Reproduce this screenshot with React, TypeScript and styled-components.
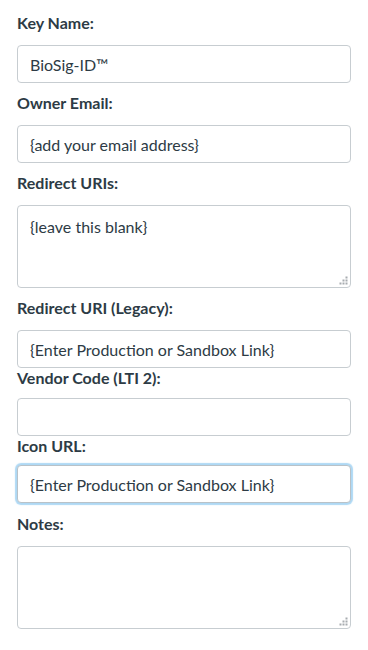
import React from "react";
import styled, { createGlobalStyle, css } from "styled-components";

const Global = createGlobalStyle`
  html, body { margin: 0; padding: 0; background: #ffffff; }
  body { font-family: Lato, "Noto Sans", sans-serif; color: #2d3b45; }
  * { box-sizing: border-box; }
`;

const Form = styled.form`
  display: flex;
  flex-direction: column;
  padding: 13px 17px 0 17px;
  width: 368px;
`;

const Field = styled.div<{ $after: number }>`
  display: flex;
  flex-direction: column;
  margin-bottom: ${(p) => p.$after}px;
`;

const Label = styled.label<{ $gap?: number }>`
  font-family: Lato, "Noto Sans", sans-serif;
  font-weight: 700;
  font-size: 16px;
  line-height: 20px;
  color: #2d3b45;
  margin-bottom: ${(p) => p.$gap ?? 12}px;
`;

const controlBase = css<{ $focus?: boolean }>`
  width: 334px;
  font-family: Lato, "Noto Sans", sans-serif;
  font-size: 16px;
  color: #2d3b45;
  background: #ffffff;
  border: 1px solid #c7cdd1;
  border-radius: 4px;
  outline: none;
  margin: 0;
  ${(p) =>
    p.$focus &&
    css`
      border-color: #b9c2c8;
      box-shadow: 0 0 1px 2px rgba(140, 200, 240, 0.7);
    `}
`;

const TextInput = styled.input<{ $focus?: boolean }>`
  ${controlBase};
  height: 38px;
  padding: 0 12px;
`;

const AreaWrap = styled.div`
  position: relative;
  width: 334px;
`;

const TextArea = styled.textarea`
  ${controlBase};
  display: block;
  height: 83px;
  padding: 9px 12px;
  line-height: 24px;
  resize: none;
`;

const Grip = styled.svg`
  position: absolute;
  right: 3px;
  bottom: 3px;
  width: 9px;
  height: 9px;
`;

const ResizeGrip = () => (
  <Grip viewBox="0 0 9 9">
    <g fill="#a7acb0">
      <rect x="6.5" y="0.5" width="2" height="2" />
      <rect x="3.5" y="3.5" width="2" height="2" />
      <rect x="6.5" y="3.5" width="2" height="2" />
      <rect x="0.5" y="6.5" width="2" height="2" />
      <rect x="3.5" y="6.5" width="2" height="2" />
      <rect x="6.5" y="6.5" width="2" height="2" />
    </g>
  </Grip>
);

const Area = ({ value }: { value: string }) => (
  <AreaWrap>
    <TextArea defaultValue={value} />
    <ResizeGrip />
  </AreaWrap>
);

export default function App() {
  return (
    <>
      <Global />
      <Form onSubmit={(e) => e.preventDefault()}>
        <Field $after={10}>
          <Label>Key Name:</Label>
          <TextInput defaultValue="BioSig-ID™" />
        </Field>
        <Field $after={10}>
          <Label>Owner Email:</Label>
          <TextInput defaultValue="{add your email address}" />
        </Field>
        <Field $after={10}>
          <Label>Redirect URIs:</Label>
          <Area value="{leave this blank}" />
        </Field>
        <Field $after={0}>
          <Label>Redirect URI (Legacy):</Label>
          <TextInput defaultValue="{Enter Production or Sandbox Link}" />
        </Field>
        <Field $after={0}>
          <Label $gap={10}>Vendor Code (LTI 2):</Label>
          <TextInput defaultValue="" />
        </Field>
        <Field $after={11}>
          <Label $gap={9}>Icon URL:</Label>
          <TextInput $focus defaultValue="{Enter Production or Sandbox Link}" />
        </Field>
        <Field $after={0}>
          <Label>Notes:</Label>
          <Area value="" />
        </Field>
      </Form>
    </>
  );
}
